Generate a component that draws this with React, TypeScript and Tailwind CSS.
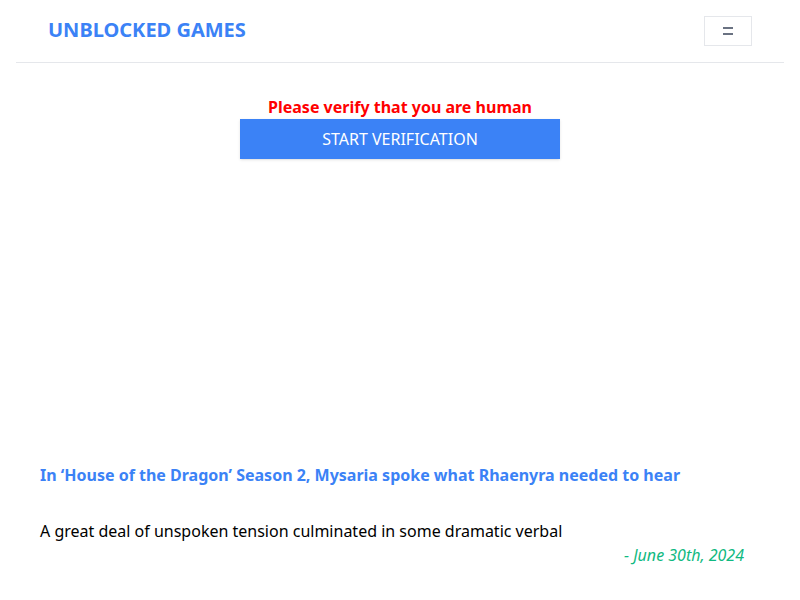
import React from 'react';

export default function App() {
  return (
    <div className="w-full min-h-[600px] bg-white font-['Noto_Sans',sans-serif]">
      <header className="mx-4 h-[63px] flex items-center justify-between border-b border-gray-200 pl-8 pr-8">
        <h1 className="text-[20px] font-bold text-[#3b82f6] leading-none -mt-[2px]">UNBLOCKED GAMES</h1>
        <button className="w-12 h-[30px] border border-gray-200 flex flex-col items-center justify-center gap-[4px]">
          <span className="block w-[10px] h-[2px] bg-gray-500" />
          <span className="block w-[10px] h-[2px] bg-gray-500" />
        </button>
      </header>
      <div className="flex flex-col items-center pt-[33px]">
        <p className="text-[16px] font-bold text-[#ff0000] leading-[22px] mb-px">Please verify that you are human</p>
        <button className="w-[320px] h-10 bg-[#3b82f6] text-white text-[16px] shadow-sm">START VERIFICATION</button>
      </div>
      <div className="px-10 pt-[304px]">
        <h2 className="text-[16px] font-bold text-[#3b82f6] leading-6">
          In ‘House of the Dragon’ Season 2, Mysaria spoke what Rhaenyra needed to hear
        </h2>
        <p className="mt-8 text-[16px] text-black leading-6">
          A great deal of unspoken tension culminated in some dramatic verbal
        </p>
        <p className="pr-4 text-right text-[16px] italic text-[#10b981] leading-6">- June 30th, 2024</p>
      </div>
    </div>
  );
}
